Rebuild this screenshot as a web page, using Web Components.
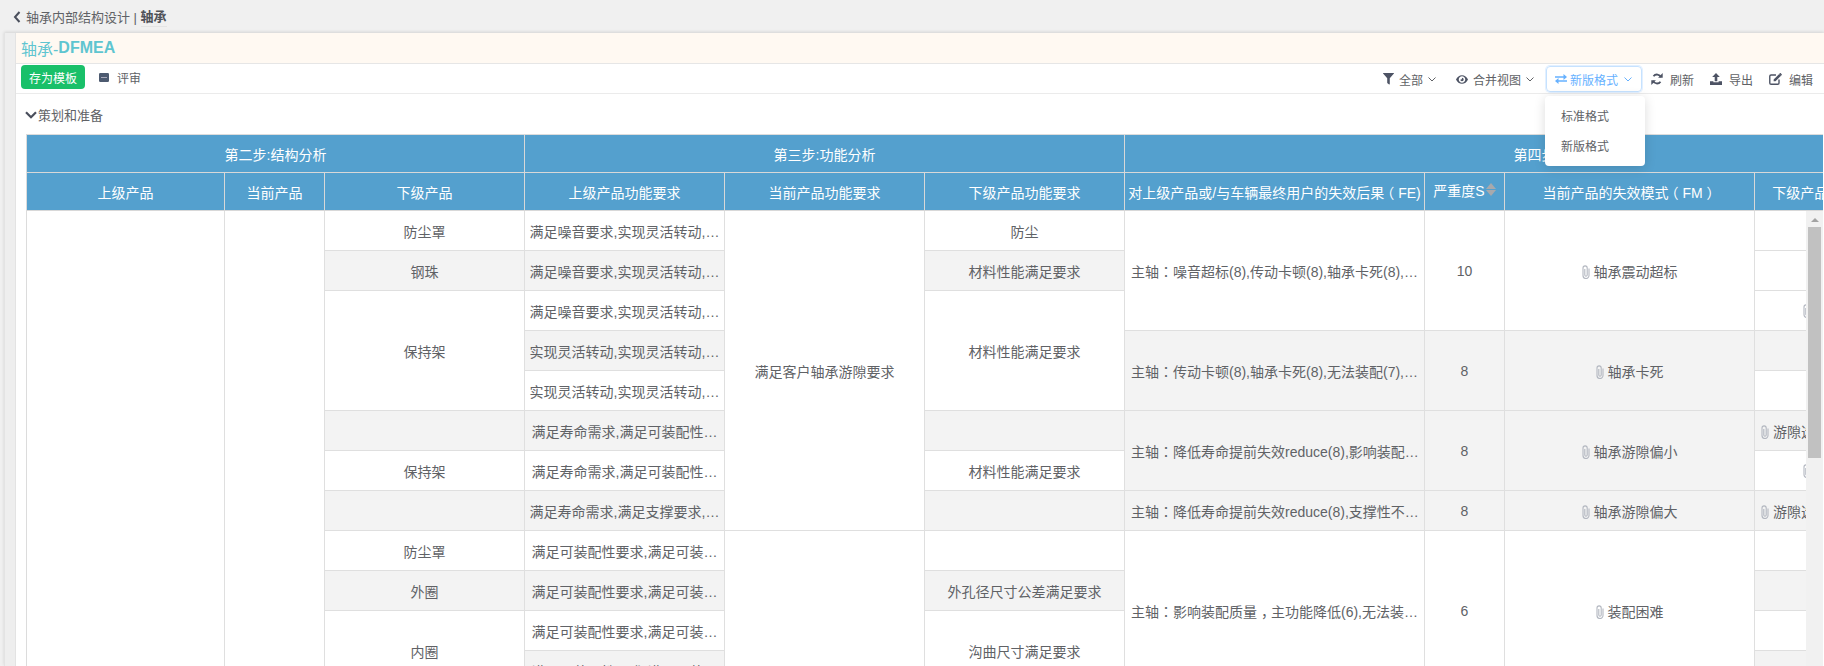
<!DOCTYPE html>
<html lang="zh"><head><meta charset="utf-8"><title>轴承-DFMEA</title>
<style>
html,body{margin:0;padding:0;height:666px;overflow:hidden;background:#f0f0f0;font-family:"Liberation Sans","Noto Sans CJK SC",sans-serif;color:#606266}
</style></head><body>
<app-page>
  <page-header slot="head" parent="轴承内部结构设计" current="轴承"></page-header>
  <title-bar slot="title"><span>轴承-</span><b>DFMEA</b></title-bar>
  <tool-bar slot="tools"></tool-bar>
  <plan-section slot="plan">策划和准备</plan-section>
  <dfmea-table slot="table"></dfmea-table>
</app-page>
<script>
const ICONS={
 filter:'<svg viewBox="0 0 12 13" width="11" height="12"><path fill="currentColor" d="M.3 0h11.4c.3 0 .4.4.2.6L7.4 5.6V12c0 .4-.4.6-.7.4L4.9 11c-.2-.1-.3-.3-.3-.5V5.6L.1.6C-.1.4 0 0 .3 0z"/></svg>',
 eye:'<svg viewBox="0 0 14 10" width="12" height="9"><path fill="currentColor" fill-rule="evenodd" d="M7 0c3 0 5.600 1.900 7 5-1.400 3.100-4 5-7 5S1.400 8.100 0 5c1.400-3.100 4-5 7-5zm0 1.200C4.900 1.200 3.200 2.900 3.200 5S4.900 8.800 7 8.800 10.800 7.100 10.800 5 9.100 1.200 7 1.200zM7 3a2 2 0 1 1-2 2c.6.500 2.300-.2 2-2z"/></svg>',
 exchange:'<svg viewBox="0 0 12 10" width="12" height="10"><path fill="currentColor" d="M0 2.200h8.500V0L12 3 8.500 6V3.800H0zM12 6.200H3.500V4L0 7l3.500 3V7.800H12z"/></svg>',
 refresh:'<svg viewBox="0 0 12 12" width="12" height="12"><path fill="none" stroke="currentColor" stroke-width="1.800" d="M10 4.200A4.300 4.300 0 0 0 2.500 3.300M2 7.800a4.300 4.300 0 0 0 7.500.9"/><path fill="currentColor" d="M11.700 0v4.700H7.100zM.3 12V7.300h4.600z"/></svg>',
 upload:'<svg viewBox="0 0 12 12" width="12" height="12"><path fill="currentColor" d="M6 0l3.800 4H7.300v4.300H4.700V4H2.200zM0 8.200h3.400v1h5.200v-1H12V12H0z"/></svg>',
 edit:'<svg viewBox="0 0 14 13" width="13" height="12"><path fill="none" stroke="currentColor" stroke-width="1.500" d="M7.500 2.200H2.200C1.400 2.200.8 2.800.8 3.600v7.200c0 .8.600 1.400 1.400 1.400h7.200c.8 0 1.400-.6 1.400-1.400V7"/><path fill="currentColor" d="M5 7l6-6 2 2-6 6H5zM11.700.3c.3-.3.700-.3 1 0l1 1c.3.300.3.700 0 1l-.6.6-2-2z"/></svg>',
 chev:'<svg viewBox="0 0 8 5" width="8" height="5"><path fill="none" stroke="currentColor" stroke-width="1" d="M.5.500 4 4 7.500.500"/></svg>',
 clip:'<svg viewBox="0 0 8 14" width="8" height="14"><path d="M7 3.500v7a3 3 0 0 1-6 0V3a2.100 2.100 0 0 1 4.200 0v7a1.200 1.200 0 0 1-2.400 0V4" fill="none" stroke="#b3b7c0" stroke-width="1.100"/></svg>'
};
const P=s=>s.replace(/：/g,'<span class="c" lang="zh-TW">：</span>').replace(/（/g,'<span class="ol">（</span>').replace(/）/g,'<span class="or">）</span>').replace(/，/g,'<span class="or">，</span>');
class Base extends HTMLElement{
  render(html){ if(!this.shadowRoot) this.attachShadow({mode:'open'}); this.shadowRoot.innerHTML=html; }
}
class AppPage extends Base{connectedCallback(){this.render(`<style>
 :host{display:flex;flex-direction:column;height:666px;width:1824px}
 .card{flex:1;min-height:0;margin-left:4px;display:flex;box-shadow:0 -1px 3px rgba(0,0,0,.12);overflow:hidden}
 .strip{background:#eeeeee;border-left:1px solid #e3e3e3;border-right:1px solid #e3e3e3;width:10px}
 .main{flex:1;min-width:0;background:#fff;display:flex;flex-direction:column}
 </style><slot name="head"></slot><div class="card"><div class="strip"></div><div class="main">
 <slot name="title"></slot><slot name="tools"></slot><slot name="plan"></slot><slot name="table"></slot></div></div>`)}}
class PageHeader extends Base{connectedCallback(){this.render(`<style>
 :host{display:flex;align-items:center;height:33px;box-sizing:border-box;padding:0 0 0 13px;font-size:13px;color:#606266;flex:none}
 svg{margin-right:5px}
 b{font-weight:700;color:#4f5258;border-bottom:1px solid #e4e4e4;padding-bottom:1px}
 span{display:inline-flex;align-items:center}
 </style><svg viewBox="0 0 8 12" width="8" height="12"><path fill="none" stroke="#4a4f5c" stroke-width="2" d="M6.500 1 2 6l4.500 5"/></svg>
 <span>${this.getAttribute('parent')}&nbsp;|&nbsp;<b>${this.getAttribute('current')}</b></span>`)}}
class TitleBar extends Base{connectedCallback(){this.render(`<style>
 :host{display:flex;align-items:center;height:31px;box-sizing:border-box;background:#fff9f2;border-bottom:1px solid #e6e6e6;padding-left:5px;font-size:16px;color:#5fc5d0;flex:none}
 </style><slot></slot>`)}}
class ToolItem extends Base{connectedCallback(){const g=+(this.getAttribute('gap')||7);const ch=this.hasAttribute('chev');this.render(`<style>
 :host{display:flex;align-items:center;font-size:12px;color:#606266;height:26px}
 .i{display:flex;color:#4d5364;margin-right:${g}px}
 .c{display:flex;margin-left:5px;color:#606266}
 </style><span class="i">${ICONS[this.getAttribute('icon')]}</span><slot></slot>${ch?`<span class="c">${ICONS.chev}</span>`:''}`)}}
class FormatDropdown extends Base{connectedCallback(){this.render(`<style>
 :host{display:block;position:relative;font-size:12px;height:26px}
 .btn{box-sizing:border-box;width:96px;height:26px;display:flex;align-items:center;padding-left:8px;border:1px solid #c6e2ff;border-radius:4px;color:#66b1ff;box-shadow:0 0 0 1px #e3f0ff}
 .btn svg{display:block}.a{display:flex;margin-right:3px}.c{display:flex;margin-left:6px}
 .menu{position:absolute;left:-1px;top:30px;width:100px;height:70px;box-sizing:border-box;background:#fff;border-radius:4px;box-shadow:0 2px 12px rgba(0,0,0,.14);padding:6px 0 4px;z-index:5}
 .it{height:30px;line-height:30px;padding-left:16px;color:#606266}
 </style><div class="btn"><span class="a">${ICONS.exchange}</span>新版格式<span class="c">${ICONS.chev}</span></div>
 <div class="menu"><div class="it">标准格式</div><div class="it">新版格式</div></div>`)}}
class ToolBar extends Base{connectedCallback(){this.render(`<style>
 :host{display:flex;align-items:flex-start;height:30px;box-sizing:border-box;border-bottom:1px solid #ebebeb;padding:1px 11px 0 5px;flex:none;position:relative;z-index:4}
 .save{height:24px;width:64px;display:flex;align-items:center;justify-content:center;background:#19c069;color:#fff;border-radius:4px;font-size:12px;margin-right:14px}
 .rev{display:flex;align-items:center;height:24px;font-size:12px;color:#606266}
 .rev svg{margin-right:8px}
 .sp{flex:1}
 tool-item,format-dropdown{margin-top:1px}
 </style><div class="save">存为模板</div>
 <div class="rev"><svg viewBox="0 0 10 9" width="10" height="9"><rect width="10" height="9" rx="1.200" fill="#4d5a70"/><rect x="2" y="4" width="6" height="1" fill="#aab"/></svg>评审</div>
 <div class="sp"></div>
 <tool-item icon="filter" gap="5" chev style="margin-right:20px">全部</tool-item>
 <tool-item icon="eye" gap="5" chev style="margin-right:12px">合并视图</tool-item>
 <format-dropdown style="margin-right:9px"></format-dropdown>
 <tool-item icon="refresh" style="margin-right:16px">刷新</tool-item>
 <tool-item icon="upload" style="margin-right:16px">导出</tool-item>
 <tool-item icon="edit">编辑</tool-item>`)}}
class PlanSection extends Base{connectedCallback(){this.render(`<style>
 :host{display:flex;align-items:center;height:40px;padding:1px 0 0 9px;box-sizing:border-box;font-size:13px;color:#606266;flex:none}
 svg{margin-right:1px}
 </style><svg viewBox="0 0 12 8" width="12" height="8"><path fill="none" stroke="#4a4f5c" stroke-width="2.200" d="M1 1.300 6 6.300l5-5"/></svg><slot></slot>`)}}
const W=[198,100,200,200,200,200,300,80,250,250];
const colg='<colgroup>'+W.map(w=>`<col style="width:${w}px">`).join('')+'</colgroup>';
const clip=`<span class="clip">${ICONS.clip}</span>`;
const prod=[['防尘罩',1,0],['钢珠',1,1],['保持架',3,0],['',1,1],['保持架',1,0],['',1,1],['防尘罩',1,0],['外圈',1,1],['内圈',2,0]];
const up=['满足噪音要求,实现灵活转动,…','满足噪音要求,实现灵活转动,…','满足噪音要求,实现灵活转动,…','实现灵活转动,实现灵活转动,…','实现灵活转动,实现灵活转动,…','满足寿命需求,满足可装配性…','满足寿命需求,满足可装配性…','满足寿命需求,满足支撑要求,…','满足可装配性要求,满足可装…','满足可装配性要求,满足可装…','满足可装配性要求,满足可装…','满足可装配性要求,满足可装…'];
const low=[['防尘',1,0],['材料性能满足要求',1,1],['材料性能满足要求',3,0],['',1,1],['材料性能满足要求',1,0],['',1,1],['',1,0],['外孔径尺寸公差满足要求',1,1],['沟曲尺寸满足要求',2,0]];
const fail=[
 ['主轴：噪音超标(8),传动卡顿(8),轴承卡死(8),…','10','轴承震动超标',3,0],
 ['主轴：传动卡顿(8),轴承卡死(8),无法装配(7),…','8','轴承卡死',2,1],
 ['主轴：降低寿命提前失效reduce(8),影响装配…','8','轴承游隙偏小',2,1],
 ['主轴：降低寿命提前失效reduce(8),支撑性不…','8','轴承游隙偏大',1,1],
 ['主轴：影响装配质量，主功能降低(6),无法装…','6','装配困难',4,0]];
const last=[['',0],['',0],['i',0],['',1],['',0],['t',1],['i',0],['t',1],['',0],['',1],['',0],['',1]];
function startMap(list){const m={};let r=0;for(const x of list){m[r]=x;r+=x[1]}return m}
function bodyRows(){
  const Pr=startMap(prod),L=startMap(low);const F={};let r=0;for(const f of fail){F[r]=f;r+=f[3]}
  let h='';
  for(let i=0;i<12;i++){
    h+='<tr>';
    if(i===0)h+='<td rowspan="12"></td><td rowspan="12"></td>';
    if(Pr[i])h+=`<td rowspan="${Pr[i][1]}" class="${Pr[i][2]?'g':''}">${Pr[i][0]}</td>`;
    h+=`<td class="${i%2?'g':''}">${up[i]}</td>`;
    if(i===0)h+='<td rowspan="8">满足客户轴承游隙要求</td>';
    if(i===8)h+='<td rowspan="4"></td>';
    if(L[i])h+=`<td rowspan="${L[i][1]}" class="${L[i][2]?'g':''}">${L[i][0]}</td>`;
    if(F[i]){const f=F[i],c=f[4]?'g':'';
      h+=`<td rowspan="${f[3]}" class="fe ${c}">${P(f[0])}</td><td rowspan="${f[3]}" class="${c}">${f[1]}</td><td rowspan="${f[3]}" class="${c}">${clip}${f[2]}</td>`;}
    const a=last[i],c=a[1]?'g':'';
    if(a[0]==='t')h+=`<td class="lc ${c}">${clip}游隙选择不当</td>`;
    else if(a[0]==='i')h+=`<td class="lc ico ${c}">${clip}</td>`;
    else h+=`<td class="${c}"></td>`;
    h+='</tr>';
  }
  return h;
}
class DfmeaTable extends Base{connectedCallback(){this.render(`<style>
 :host{display:flex;flex-direction:column;flex:1;min-height:0;margin:0 1px 0 10px;overflow:hidden;border-top:1px solid #dcdcdc;border-left:1px solid #dcdcdc;font-size:14px;color:#606266}
 table{table-layout:fixed;border-collapse:separate;border-spacing:0;width:${W.reduce((a,b)=>a+b,0)}px}
 th,td{box-sizing:border-box;border-right:1px solid #dfdfdf;border-bottom:1px solid #dfdfdf;text-align:center;white-space:nowrap;overflow:hidden;padding:0;font-weight:400}
 th{background:#54a0ce;color:#fff;height:38px;border-color:#d8d8d8}
 td{height:40px;background:#fff}
 td.g{background:#f3f3f3}
 td.fe{text-align:left;padding-left:6px}
 td.lc{text-align:left;padding-left:6px}
 td.ico{padding-left:48px}
 .c{font-family:"Noto Sans CJK TC",sans-serif}
 .ol,.or{display:inline-block}
 .ol{transform:translateX(-4px)}
 .or{transform:translateX(4px)}
 .clip{display:inline-block;vertical-align:-2px;margin-right:4px;height:14px}
 .sh{display:flex;align-items:center;justify-content:center;margin-top:-4px}
 .sort{display:flex;flex-direction:column;gap:1px;margin-left:1px}
 .sort i{display:block;width:0;height:0;border-left:5px solid transparent;border-right:5px solid transparent}
 .sort i:first-child{border-bottom:6px solid #a7a9ad}.sort i:last-child{border-top:6px solid #a7a9ad}
 .body{flex:1;min-height:0;display:flex}
 .view{flex:1;min-width:0;overflow:hidden}
 .bar{flex:none;width:17px;background:#f1f1f1;display:flex;flex-direction:column;align-items:center;padding-top:7px;box-sizing:border-box}
 .up{width:0;height:0;border-left:4px solid transparent;border-right:4px solid transparent;border-bottom:4px solid #a3a3a3;margin-bottom:5px}
 .thumb{width:13px;height:231px;background:#c1c1c1}
 </style>
 <table>${colg}<tr><th colspan="3">第二步:结构分析</th><th colspan="3">第三步:功能分析</th><th colspan="4">第四步:失效分析</th></tr>
 <tr><th>上级产品</th><th>当前产品</th><th>下级产品</th><th>上级产品功能要求</th><th>当前产品功能要求</th><th>下级产品功能要求</th><th>${P('对上级产品或/与车辆最终用户的失效后果（FE)')}</th><th><div class="sh"><span>严重度S</span><span class="sort"><i></i><i></i></span></div></th><th>${P('当前产品的失效模式（FM）')}</th><th>${P('下级产品或特性的失效起因（FC）')}</th></tr></table>
 <div class="body"><div class="view"><table>${colg}${bodyRows()}</table></div><div class="bar"><div class="up"></div><div class="thumb"></div></div></div>`)}}
for(const [n,c] of Object.entries({'app-page':AppPage,'page-header':PageHeader,'title-bar':TitleBar,'tool-item':ToolItem,'format-dropdown':FormatDropdown,'tool-bar':ToolBar,'plan-section':PlanSection,'dfmea-table':DfmeaTable}))customElements.define(n,c);
</script>
</body></html>
